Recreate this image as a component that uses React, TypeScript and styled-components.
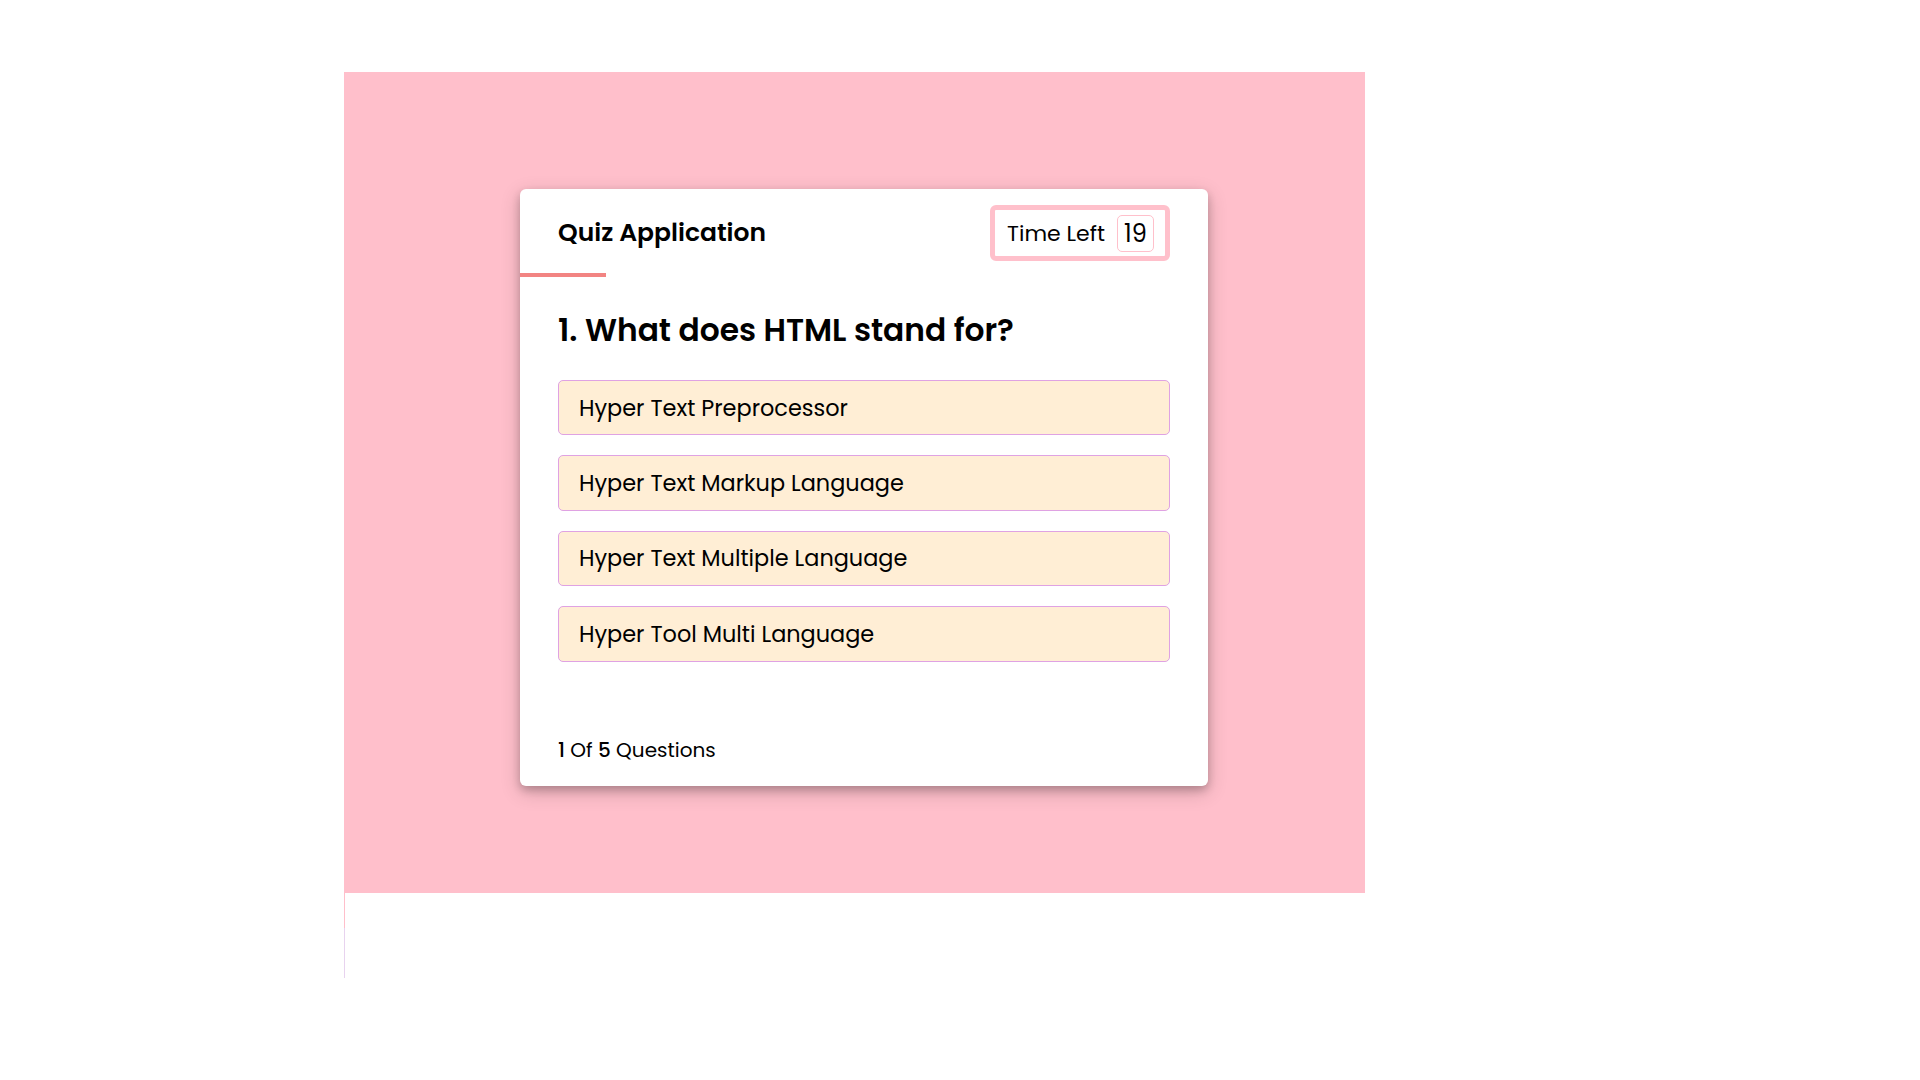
import React from "react";
import styled, { createGlobalStyle } from "styled-components";

const GlobalStyle = createGlobalStyle`
  html, body {
    margin: 0;
    padding: 0;
    background: #ffffff;
  }
  body {
    font-family: "Poppins", "Open Sans", sans-serif;
    color: #000000;
  }
  * {
    box-sizing: border-box;
  }
`;

const Page = styled.div`
  padding: 72px 0 0 344px;
`;

const Stage = styled.main`
  width: 1021px;
  height: 821px;
  background: #ffbfcb;
  padding: 117px 0 0 176px;
`;

const Card = styled.section`
  width: 688px;
  background: #ffffff;
  border-radius: 6px;
  box-shadow: 0 4px 8px 0 rgba(0, 0, 0, 0.2), 0 6px 20px 0 rgba(0, 0, 0, 0.19);
`;

const Header = styled.header`
  position: relative;
  height: 88px;
  padding: 0 38px;
  display: flex;
  align-items: center;
  justify-content: space-between;

  &::after {
    content: "";
    position: absolute;
    left: 0;
    bottom: 0;
    width: 86px;
    height: 4px;
    background: #f28482;
  }
`;

const Title = styled.h1`
  margin: 0;
  font-size: 25px;
  font-weight: 600;
  line-height: 1.36;
`;

const Timer = styled.div`
  display: flex;
  align-items: center;
  gap: 12px;
  height: 56px;
  padding: 0 11px 0 12px;
  border: 5px solid #ffc0cb;
  border-radius: 6px;
`;

const TimerLabel = styled.span`
  font-size: 22px;
  font-weight: 400;
`;

const TimerValue = styled.span`
  display: flex;
  align-items: center;
  justify-content: center;
  width: 37px;
  height: 37px;
  border: 1px solid #ffc0cb;
  border-radius: 5px;
  font-size: 24px;
  font-weight: 400;
`;

const Body = styled.div`
  padding: 31px 38px 0;
`;

const Question = styled.h2`
  margin: 0 0 28px;
  font-size: 31.3px;
  font-weight: 600;
  line-height: 44px;
`;

const OptionList = styled.ul`
  list-style: none;
  margin: 0;
  padding: 0;
  display: flex;
  flex-direction: column;
  gap: 20px;
`;

const Option = styled.li`
  display: flex;
  align-items: center;
  height: 55.4px;
  padding: 0 20px;
  background: #ffeed5;
  border: 1px solid #dfa2e3;
  border-radius: 5px;
  font-size: 22.4px;
  cursor: pointer;
`;

const Footer = styled.footer`
  padding: 73px 38px 21px;
  font-size: 20px;
  line-height: 30px;
`;

const Count = styled.span`
  font-weight: 500;
`;

const Trail = styled.div`
  margin-left: 344px;
  width: 1px;
  display: flex;
  flex-direction: column;
`;

const TrailSegment = styled.div<{ $color: string; $h: number }>`
  width: 1px;
  height: ${(p) => p.$h}px;
  background: ${(p) => p.$color};
`;

const options = [
  "Hyper Text Preprocessor",
  "Hyper Text Markup Language",
  "Hyper Text Multiple Language",
  "Hyper Tool Multi Language",
];

export default function App() {
  return (
    <>
      <GlobalStyle />
      <Page>
        <Stage>
          <Card>
            <Header>
              <Title>Quiz Application</Title>
              <Timer>
                <TimerLabel>Time Left</TimerLabel>
                <TimerValue>19</TimerValue>
              </Timer>
            </Header>
            <Body>
              <Question>1. What does HTML stand for?</Question>
              <OptionList>
                {options.map((o) => (
                  <Option key={o}>{o}</Option>
                ))}
              </OptionList>
            </Body>
            <Footer>
              <Count>1</Count> Of <Count>5</Count> Questions
            </Footer>
          </Card>
        </Stage>
      </Page>
      <Trail>
        <TrailSegment $color="#ffbfcb" $h={35} />
        <TrailSegment $color="#e8d3ef" $h={50} />
      </Trail>
    </>
  );
}
